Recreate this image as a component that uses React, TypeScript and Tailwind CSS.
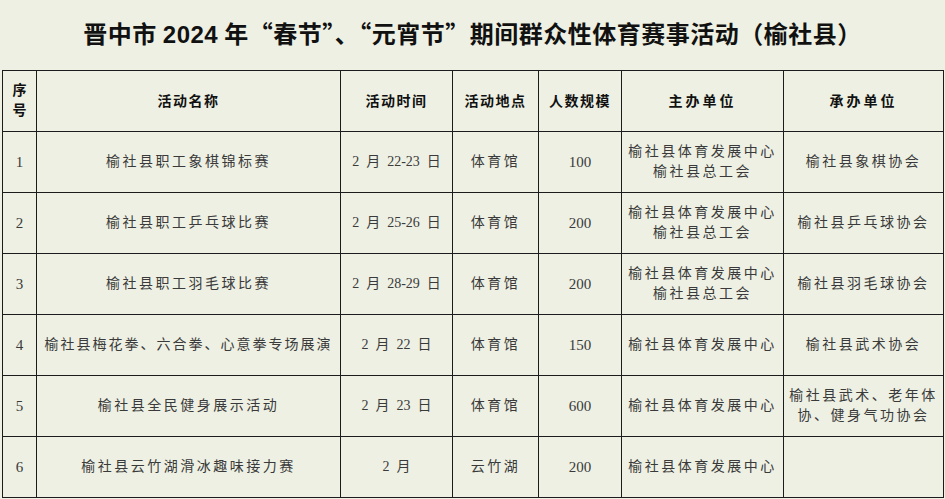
import React from 'react';

type Row = {
  no: string;
  name: string;
  time: string;
  place: string;
  size: string;
  host: string[];
  org: string[];
};

const rows: Row[] = [
  { no: '1', name: '榆社县职工象棋锦标赛', time: '2 月 22-23 日', place: '体育馆', size: '100', host: ['榆社县体育发展中心', '榆社县总工会'], org: ['榆社县象棋协会'] },
  { no: '2', name: '榆社县职工乒乓球比赛', time: '2 月 25-26 日', place: '体育馆', size: '200', host: ['榆社县体育发展中心', '榆社县总工会'], org: ['榆社县乒乓球协会'] },
  { no: '3', name: '榆社县职工羽毛球比赛', time: '2 月 28-29 日', place: '体育馆', size: '200', host: ['榆社县体育发展中心', '榆社县总工会'], org: ['榆社县羽毛球协会'] },
  { no: '4', name: '榆社县梅花拳、六合拳、心意拳专场展演', time: '2 月 22 日', place: '体育馆', size: '150', host: ['榆社县体育发展中心'], org: ['榆社县武术协会'] },
  { no: '5', name: '榆社县全民健身展示活动', time: '2 月 23 日', place: '体育馆', size: '600', host: ['榆社县体育发展中心'], org: ['榆社县武术、老年体', '协、健身气功协会'] },
  { no: '6', name: '榆社县云竹湖滑冰趣味接力赛', time: '2 月', place: '云竹湖', size: '200', host: ['榆社县体育发展中心'], org: [] },
];

const cjk = { fontFamily: '"Liberation Serif", "Noto Sans CJK SC", serif' };

const th = 'border-[1.5px] border-[#1c1c1c] text-center align-middle font-bold text-[14px] tracking-[1.5px] text-[#111]';
const td = 'border-[1.5px] border-[#1c1c1c] text-center align-middle text-[14px] tracking-[2.5px] text-[#3a3a3a] leading-[20px]';

const App: React.FC = () => {
  return (
    <div className="w-[945px] h-[499px] overflow-hidden bg-[#edf0e3]" style={cjk}>
      <div className="h-[70px] flex items-center justify-center pb-[2px]">
        <h1
          className="text-[24px] font-bold text-[#111] tracking-[0.5px]"
          style={{ fontFamily: '"Noto Sans CJK SC", sans-serif' }}
        >
          晋中市 <span style={{ fontFamily: '"Liberation Sans", sans-serif' }}>2024</span> 年“春节”、“元宵节”期间群众性体育赛事活动（榆社县）
        </h1>
      </div>

      <table className="ml-[2px] w-[941px] table-fixed border-collapse">
        <colgroup>
          <col className="w-[34px]" />
          <col className="w-[304px]" />
          <col className="w-[112px]" />
          <col className="w-[86px]" />
          <col className="w-[83px]" />
          <col className="w-[162px]" />
          <col className="w-[160px]" />
        </colgroup>
        <thead>
          <tr className="h-[61px]">
            <th className={th + ' leading-[20px] tracking-normal'}>
              序<br />号
            </th>
            <th className={th}>活动名称</th>
            <th className={th}>活动时间</th>
            <th className={th}>活动地点</th>
            <th className={th + ' tracking-[0.5px]'}>人数规模</th>
            <th className={th + ' tracking-[3px]'}>主办单位</th>
            <th className={th + ' tracking-[3px]'}>承办单位</th>
          </tr>
        </thead>
        <tbody>
          {rows.map((r) => (
            <tr key={r.no} className="h-[61px]">
              <td className={td + ' text-[15px] tracking-normal'}>{r.no}</td>
              <td className={td + (r.name.length > 14 ? ' tracking-[2px] whitespace-nowrap' : '')}>{r.name}</td>
              <td className={td + ' tracking-normal whitespace-nowrap'}>{r.time.replace(/ /g, '\u2002')}</td>
              <td className={td}>{r.place}</td>
              <td className={td + ' text-[15px] tracking-normal'}>{r.size}</td>
              <td className={td + ' tracking-[2.5px]'}>
                {r.host.map((h, i) => (
                  <div key={i}>{h}</div>
                ))}
              </td>
              <td className={td + ' tracking-[2.5px]'}>
                {r.org.map((o, i) => (
                  <div key={i}>{o}</div>
                ))}
              </td>
            </tr>
          ))}
        </tbody>
      </table>
    </div>
  );
};

export default App;
